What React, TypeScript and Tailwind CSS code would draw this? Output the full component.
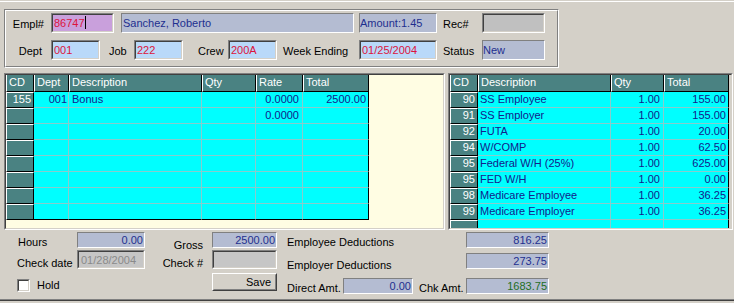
import React from "react";

type Col = { w: string; hd: string; align: string };

const leftCols: Col[] = [
  { w: "w-[28px]", hd: "CD", align: "text-right pr-[2px]" },
  { w: "w-[35px]", hd: "Dept", align: "text-right pr-[1px]" },
  { w: "w-[133px]", hd: "Description", align: "text-left pl-[3px]" },
  { w: "w-[54px]", hd: "Qty", align: "text-right pr-[3px]" },
  { w: "w-[47px]", hd: "Rate", align: "text-right pr-[3px]" },
  { w: "w-[66px]", hd: "Total", align: "text-right pr-[2px]" },
];

const rightCols: Col[] = [
  { w: "w-[28px]", hd: "CD", align: "text-right pr-[2px]" },
  { w: "w-[133px]", hd: "Description", align: "text-left pl-[2px]" },
  { w: "w-[53px]", hd: "Qty", align: "text-right pr-[3px]" },
  { w: "w-[65px]", hd: "Total", align: "text-right pr-[2px]" },
];

const leftRows: string[][] = [
  ["155", "001", "Bonus", "", "0.0000", "2500.00"],
  ["", "", "", "", "0.0000", ""],
  ["", "", "", "", "", ""],
  ["", "", "", "", "", ""],
  ["", "", "", "", "", ""],
  ["", "", "", "", "", ""],
  ["", "", "", "", "", ""],
  ["", "", "", "", "", ""],
];

const rightRows: string[][] = [
  ["90", "SS Employee", "1.00", "155.00"],
  ["91", "SS Employer", "1.00", "155.00"],
  ["92", "FUTA", "1.00", "20.00"],
  ["94", "W/COMP", "1.00", "62.50"],
  ["95", "Federal W/H (25%)", "1.00", "625.00"],
  ["95", "FED W/H", "1.00", "0.00"],
  ["98", "Medicare Employee", "1.00", "36.25"],
  ["99", "Medicare Employer", "1.00", "36.25"],
];

function Header({ cols }: { cols: Col[] }) {
  return (
    <div className="flex h-[17px]">
      {cols.map((c, i) => (
        <div
          key={i}
          className={`${c.w} h-[17px] shrink-0 bg-[#4a8282] text-white border-l border-l-white border-r border-r-black border-b border-b-black pl-[2px] leading-[15px] whitespace-nowrap overflow-hidden`}
        >
          {c.hd}
        </div>
      ))}
    </div>
  );
}

function Row({ cols, cells, lastRow, partial }: { cols: Col[]; cells: string[]; lastRow: boolean; partial?: boolean }) {
  return (
    <div className={`flex ${partial ? "h-[8px]" : "h-[16px]"} overflow-hidden`}>
      {cols.map((c, i) => {
        const lastCol = i === cols.length - 1;
        if (i === 0) {
          return (
            <div
              key={i}
              className={`${c.w} h-[16px] shrink-0 bg-[#4a8282] text-white border-t border-t-white border-l border-l-white border-r border-r-black border-b border-b-black leading-[13px] ${c.align}`}
            >
              {cells[i]}
            </div>
          );
        }
        return (
          <div
            key={i}
            className={`${c.w} h-[16px] shrink-0 bg-[#00ffff] text-[#14208a] border-r border-b leading-[15px] whitespace-nowrap overflow-hidden ${
              lastCol ? "border-r-black" : "border-r-[#88cccc]"
            } ${lastRow ? "border-b-black" : "border-b-[#88cccc]"} ${c.align}`}
          >
            {cells[i]}
          </div>
        );
      })}
    </div>
  );
}

function Box1({ className, children }: { className: string; children?: React.ReactNode }) {
  return (
    <div
      className={`border border-t-[#808080] border-l-[#808080] border-b-white border-r-white leading-[14px] whitespace-nowrap overflow-hidden ${className}`}
    >
      {children}
    </div>
  );
}

function Box2({ className, inner, children }: { className: string; inner: string; children?: React.ReactNode }) {
  return (
    <div className={`border border-t-[#808080] border-l-[#808080] border-b-white border-r-white ${className}`}>
      <div
        className={`h-full border border-t-[#404040] border-l-[#404040] border-b-[#d4d0c8] border-r-[#d4d0c8] whitespace-nowrap overflow-hidden leading-[16px] ${inner}`}
      >
        {children}
      </div>
    </div>
  );
}

export default function App() {
  return (
    <div className="w-[734px] h-[303px] bg-[#d4d0c8] overflow-hidden font-['Liberation_Sans',Arial,sans-serif] text-[11px] text-black select-none">
      <div className="h-px" />
      <div className="h-px bg-white" />
      {/* Top group box */}
      <div className="ml-[4px] mt-[7px] w-[555px] h-[59px] border border-t-[#808080] border-l-[#808080] border-r-white border-b-white">
        <div className="h-full border border-t-white border-l-white border-r-[#808080] border-b-[#808080]">
          <div className="flex items-center h-[20px] mt-[2px]">
            <div className="w-[45px] text-right pr-[7px] pt-[3px]">Empl#</div>
            <Box2 className="w-[63px] h-[20px]" inner="bg-[#c9a0dc] text-[#dc143c] pl-[1px]">
              86747<span className="inline-block w-px h-[13px] bg-black align-[-2px]" />
            </Box2>
            <Box1 className="ml-[7px] w-[233px] h-[20px] bg-[#b4bcd2] text-[#1e2f8f] pl-[1px] leading-[18px]">Sanchez, Roberto</Box1>
            <Box1 className="ml-[5px] w-[78px] h-[20px] bg-[#b4bcd2] text-[#1e2f8f] leading-[18px]">Amount:1.45</Box1>
            <div className="w-[45px] pl-[6px] pt-[3px]">Rec#</div>
            <Box2 className="w-[63px] h-[20px]" inner="bg-[#c0c0c0]" />
          </div>
          <div className="flex items-center h-[20px] mt-[7px]">
            <div className="w-[45px] text-right pr-[9px] pt-[3px]">Dept</div>
            <Box2 className="w-[49px] h-[20px]" inner="bg-[#b9d9f9] text-[#dc143c] pl-[1px]">001</Box2>
            <div className="w-[34px] pl-[9px] pt-[3px]">Job</div>
            <Box2 className="w-[49px] h-[20px]" inner="bg-[#b9d9f9] text-[#dc143c] pl-[1px]">222</Box2>
            <div className="w-[45px] pl-[15px] pt-[3px]">Crew</div>
            <Box2 className="w-[49px] h-[20px]" inner="bg-[#b9d9f9] text-[#dc143c] pl-[1px]">200A</Box2>
            <div className="w-[82px] pl-[6px] pt-[3px]">Week Ending</div>
            <Box2 className="w-[78px] h-[20px]" inner="bg-[#b9d9f9] text-[#dc143c] pl-[1px]">01/25/2004</Box2>
            <div className="w-[45px] pl-[6px] pt-[3px]">Status</div>
            <Box1 className="w-[63px] h-[20px] bg-[#b4bcd2] text-[#1e2f8f] leading-[18px]">New</Box1>
          </div>
        </div>
      </div>

      {/* Grids */}
      <div className="flex mt-[5px] h-[157px]">
        <div className="ml-[4px] w-[441px] h-[157px] border border-t-[#808080] border-l-[#808080] border-b-white border-r-white">
          <div className="h-full bg-[#fffde3] border border-t-[#404040] border-l-[#404040] border-b-[#d4d0c8] border-r-[#d4d0c8]">
            <Header cols={leftCols} />
            {leftRows.map((r, i) => (
              <Row key={i} cols={leftCols} cells={r} lastRow={i === leftRows.length - 1} />
            ))}
          </div>
        </div>
        <div className="ml-[3px] w-[285px] h-[157px] border border-t-[#808080] border-l-[#808080] border-b-white border-r-white">
          <div className="h-full overflow-hidden border border-t-[#404040] border-l-[#404040] border-b-[#d4d0c8] border-r-[#d4d0c8]">
            <Header cols={rightCols} />
            {rightRows.map((r, i) => (
              <Row key={i} cols={rightCols} cells={r} lastRow={false} />
            ))}
            <Row cols={rightCols} cells={["", "", "", ""]} lastRow={false} partial />
          </div>
        </div>
      </div>

      {/* Bottom */}
      <div className="flex h-[70px] border-b border-b-[#808080]">
        <div className="ml-[17px] w-[128px] flex flex-col">
          <div className="flex h-[16px] mt-[2px]">
            <div className="w-[60px] pl-[1px] pt-[2px]">Hours</div>
            <Box1 className="w-[68px] h-[16px] bg-[#b4bcd2] text-[#1e2f8f] text-right pr-px">0.00</Box1>
          </div>
          <div className="flex h-[19px] mt-[2px]">
            <div className="w-[60px] pt-[5px] whitespace-nowrap">Check date</div>
            <Box2 className="w-[68px] h-[19px]" inner="bg-[#c6c6c6] text-[#8a8a8a] pl-[2px] leading-[15px]">01/28/2004</Box2>
          </div>
          <div className="flex items-center mt-[10px] h-[13px]">
            <div className="w-[13px] h-[13px] border border-t-[#808080] border-l-[#808080] border-b-white border-r-white">
              <div className="w-full h-full bg-white border border-t-[#404040] border-l-[#404040] border-b-[#d4d0c8] border-r-[#d4d0c8]" />
            </div>
            <div className="ml-[7px]">Hold</div>
          </div>
        </div>
        <div className="w-[132px] flex flex-col">
          <div className="flex h-[16px] mt-[2px]">
            <div className="w-[67px] text-right pr-[9px] pt-[5px]">Gross</div>
            <Box1 className="w-[65px] h-[16px] bg-[#b4bcd2] text-[#1e2f8f] text-right pr-px">2500.00</Box1>
          </div>
          <div className="flex h-[19px] mt-[2px]">
            <div className="w-[67px] text-right pr-[9px] pt-[5px] whitespace-nowrap">Check #</div>
            <Box2 className="w-[65px] h-[19px]" inner="bg-[#c6c6c6]" />
          </div>
          <div className="ml-[67px] mt-[4px] w-[65px] h-[18px] border border-t-white border-l-white border-b-[#404040] border-r-[#404040]">
            <div className="h-full border border-t-[#d4d0c8] border-l-[#d4d0c8] border-b-[#808080] border-r-[#808080] text-right pr-[4px] leading-[14px]">
              Save
            </div>
          </div>
        </div>
        <div className="ml-[10px] flex flex-col">
          <div className="flex h-[16px] mt-[2px]">
            <div className="w-[179px] pt-[2px]">Employee Deductions</div>
            <Box1 className="w-[83px] h-[16px] bg-[#b4bcd2] text-[#1e2f8f] text-right pr-px">816.25</Box1>
          </div>
          <div className="flex h-[16px] mt-[5px]">
            <div className="w-[179px] pt-[4px]">Employer Deductions</div>
            <Box1 className="w-[83px] h-[16px] bg-[#b4bcd2] text-[#1e2f8f] text-right pr-px">273.75</Box1>
          </div>
          <div className="flex h-[16px] mt-[9px]">
            <div className="w-[56px] pt-[2px] whitespace-nowrap">Direct Amt.</div>
            <Box1 className="w-[70px] h-[16px] bg-[#b4bcd2] text-[#1e2f8f] text-right pr-px">0.00</Box1>
            <div className="w-[53px] pl-[6px] pt-[2px] whitespace-nowrap">Chk Amt.</div>
            <Box1 className="w-[83px] h-[16px] bg-[#b4bcd2] text-[#1e6e1e] text-right pr-px">1683.75</Box1>
          </div>
        </div>
      </div>
      <div className="h-px bg-[#404040]" />
    </div>
  );
}
